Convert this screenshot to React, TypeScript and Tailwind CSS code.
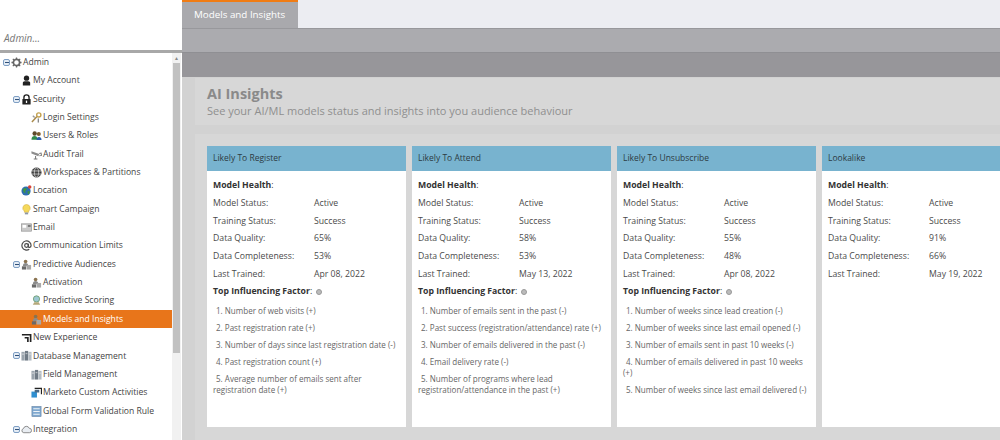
import React from 'react';

type TreeRow = { label: string; depth: number; toggle?: boolean; icon: string; active?: boolean };

const tree: TreeRow[] = [
  { label: 'Admin', depth: 0, toggle: true, icon: 'gear' },
  { label: 'My Account', depth: 1, icon: 'person' },
  { label: 'Security', depth: 1, toggle: true, icon: 'lock' },
  { label: 'Login Settings', depth: 2, icon: 'key' },
  { label: 'Users & Roles', depth: 2, icon: 'users' },
  { label: 'Audit Trail', depth: 2, icon: 'camera' },
  { label: 'Workspaces & Partitions', depth: 2, icon: 'globe' },
  { label: 'Location', depth: 1, icon: 'earth' },
  { label: 'Smart Campaign', depth: 1, icon: 'bulb' },
  { label: 'Email', depth: 1, icon: 'mail' },
  { label: 'Communication Limits', depth: 1, icon: 'at' },
  { label: 'Predictive Audiences', depth: 1, toggle: true, icon: 'audience' },
  { label: 'Activation', depth: 2, icon: 'audience' },
  { label: 'Predictive Scoring', depth: 2, icon: 'scoring' },
  { label: 'Models and Insights', depth: 2, icon: 'audience', active: true },
  { label: 'New Experience', depth: 1, icon: 'arrow' },
  { label: 'Database Management', depth: 1, toggle: true, icon: 'db' },
  { label: 'Field Management', depth: 2, icon: 'db' },
  { label: 'Marketo Custom Activities', depth: 2, icon: 'custom' },
  { label: 'Global Form Validation Rule', depth: 2, icon: 'form' },
  { label: 'Integration', depth: 1, toggle: true, icon: 'cloud' },
];

const cards = [
  {
    title: 'Likely To Register',
    stats: ['Active', 'Success', '65%', '53%', 'Apr 08, 2022'],
    factors: [
      'Number of web visits (+)',
      'Past registration rate (+)',
      'Number of days since last registration date (-)',
      'Past registration count (+)',
      'Average number of emails sent after registration date (+)',
    ],
  },
  {
    title: 'Likely To Attend',
    stats: ['Active', 'Success', '58%', '53%', 'May 13, 2022'],
    factors: [
      'Number of emails sent in the past (-)',
      'Past success (registration/attendance) rate (+)',
      'Number of emails delivered in the past (-)',
      'Email delivery rate (-)',
      'Number of programs where lead registration/attendance in the past (+)',
    ],
  },
  {
    title: 'Likely To Unsubscribe',
    stats: ['Active', 'Success', '55%', '48%', 'Apr 08, 2022'],
    factors: [
      'Number of weeks since lead creation (-)',
      'Number of weeks since last email opened (-)',
      'Number of emails sent in past 10 weeks (-)',
      'Number of emails delivered in past 10 weeks (+)',
      'Number of weeks since last email delivered (-)',
    ],
  },
  {
    title: 'Lookalike',
    stats: ['Active', 'Success', '91%', '66%', 'May 19, 2022'],
    factors: [],
  },
];

const statLabels = ['Model Status:', 'Training Status:', 'Data Quality:', 'Data Completeness:', 'Last Trained:'];

const TreeIcon = ({ name }: { name: string }) => {
  const common = { width: 11, height: 11, viewBox: '0 0 12 12', className: 'shrink-0' };
  switch (name) {
    case 'gear':
      return (
        <svg {...common}>
          <circle cx="6" cy="6" r="3.400" fill="none" stroke="#666" strokeWidth="1.800" />
          <path d="M6 .5v2M6 9.500v2M.5 6h2M9.500 6h2M2 2l1.500 1.500M8.500 8.500 10 10M10 2 8.500 3.500M3.500 8.500 2 10" stroke="#666" strokeWidth="1.400" />
        </svg>
      );
    case 'person':
      return (
        <svg {...common}>
          <circle cx="6" cy="3.500" r="2.900" fill="#222" />
          <path d="M2 11.500V8.500C2 7.200 3.500 6.800 6 6.800s4 .4 4 1.700v3z" fill="#222" />
        </svg>
      );
    case 'lock':
      return (
        <svg {...common}>
          <path d="M3.200 6V3.800a2.800 2.800 0 0 1 5.600 0V6" fill="none" stroke="#222" strokeWidth="1.500" />
          <rect x="1.500" y="5.500" width="9" height="6" rx="0.600" fill="#222" />
          <rect x="5.300" y="7.200" width="1.400" height="2.600" fill="#fff" />
        </svg>
      );
    case 'key':
      return (
        <svg {...common}>
          <path d="M1 11 6.500 5" stroke="#a98a4a" strokeWidth="1.600" />
          <circle cx="8.500" cy="3.200" r="2.300" fill="none" stroke="#c2a04e" strokeWidth="1.500" />
          <path d="M2 4l2 2" stroke="#999" strokeWidth="1.500" />
          <path d="M8 7v4.500" stroke="#8a8a8a" strokeWidth="1.500" />
        </svg>
      );
    case 'users':
      return (
        <svg {...common}>
          <circle cx="4" cy="3.800" r="2.400" fill="#5d4a2a" />
          <circle cx="8.500" cy="4.300" r="2.200" fill="#7a5c2e" />
          <path d="M.5 10.500c0-3 1.500-4 3.500-4s3 1 3 4z" fill="#2f8a4a" />
          <path d="M6 11c0-2.500 1-3.500 2.700-3.500S11.500 8.500 11.500 11z" fill="#2a5fa8" />
        </svg>
      );
    case 'camera':
      return (
        <svg {...common}>
          <path d="M.5 2.500 9 5.500 8 8 .5 5z" fill="#8d8d8d" />
          <path d="M9 5l2-.5.500 2.500-2.500.5M5 7.500V11M3 11h4" stroke="#777" strokeWidth="1.100" fill="none" />
        </svg>
      );
    case 'globe':
      return (
        <svg {...common} fill="none" stroke="#333" strokeWidth="1">
          <circle cx="6" cy="6" r="5" fill="#444" />
          <ellipse cx="6" cy="6" rx="2.300" ry="5" stroke="#ddd" strokeWidth="0.800" />
          <path d="M1 4.300h10M1 7.700h10" stroke="#ddd" strokeWidth="0.800" />
        </svg>
      );
    case 'earth':
      return (
        <svg {...common}>
          <circle cx="5.500" cy="6.500" r="5" fill="#2f6fb0" />
          <path d="M2 4.500 5 3l1.500 2-2 1.500.5 2.500-2-1zM7 7l2.500-.5L9 10 7.500 9.500z" fill="#3f9a3e" />
          <circle cx="9.500" cy="2.300" r="1.900" fill="#d6413a" />
        </svg>
      );
    case 'bulb':
      return (
        <svg {...common}>
          <path d="M6 .5a4 4 0 0 0-2.300 7.300V9h4.600V7.800A4 4 0 0 0 6 .5z" fill="#f5d95c" stroke="#cfa92f" strokeWidth="0.600" />
          <rect x="4.200" y="9.300" width="3.600" height="2" fill="#8d97a5" />
        </svg>
      );
    case 'mail':
      return (
        <svg {...common}>
          <rect x="0.500" y="2" width="11" height="8" fill="#c9c9c9" stroke="#8f8f8f" strokeWidth="0.700" />
          <rect x="1.700" y="3.300" width="4" height="3" fill="#fff" />
          <rect x="7.500" y="3.200" width="3" height="2.200" fill="#777" />
        </svg>
      );
    case 'at':
      return (
        <svg {...common} fill="none" stroke="#4a4a4a" strokeWidth="1.300">
          <circle cx="6" cy="6" r="2" />
          <path d="M8 4v3c0 1.600 3 1.400 3-1a5 5 0 1 0-2 4" />
        </svg>
      );
    case 'audience':
      return (
        <svg {...common}>
          <circle cx="5" cy="2.700" r="2" fill="#8a7350" />
          <path d="M2 8c0-2.600 1.300-3.600 3-3.600S8 5.400 8 8z" fill="#8b8b8b" />
          <rect x="1" y="8" width="4.500" height="3.500" fill="#6a6a6a" />
          <rect x="6" y="6.500" width="5" height="5" fill="#a8a8a8" />
        </svg>
      );
    case 'scoring':
      return (
        <svg {...common}>
          <circle cx="6" cy="4.300" r="3.400" fill="#9cc7d2" stroke="#6b9a6a" strokeWidth="0.900" />
          <path d="M2 10.500h8L8.500 8h-5z" fill="#b5a87a" />
        </svg>
      );
    case 'arrow':
      return (
        <svg {...common} fill="none" stroke="#222" strokeWidth="1.800">
          <path d="M1 3h9.500v8M4 6.300h3.500v4.700" />
        </svg>
      );
    case 'db':
      return (
        <svg {...common}>
          <rect x="0.500" y="2" width="3.500" height="9.500" fill="#9aa4ad" />
          <rect x="4.300" y="1" width="3.500" height="10.500" fill="#6f7a85" />
          <rect x="8" y="2" width="3.500" height="9.500" fill="#b3bbc2" />
          <path d="M1 4.500h2.500M5 4h2M8.500 4.500H11" stroke="#eee" strokeWidth="0.700" />
        </svg>
      );
    case 'custom':
      return (
        <svg {...common}>
          <path d="M4 1.500h7.500V8" fill="none" stroke="#222" strokeWidth="1.500" />
          <rect x="0.500" y="5" width="6" height="6.500" fill="#2f8fd0" />
          <rect x="4" y="3" width="5" height="3" fill="#4a6a85" />
        </svg>
      );
    case 'form':
      return (
        <svg {...common}>
          <rect x="1" y="0.500" width="10" height="11" fill="#7fa8cf" stroke="#5f7f9f" strokeWidth="0.600" />
          <path d="M2.500 3h7M2.500 6h7M2.500 9h7" stroke="#eef3f8" strokeWidth="1.100" />
        </svg>
      );
    default:
      return (
        <svg {...common}>
          <path d="M3 9.500a2.300 2.300 0 0 1-.3-4.500 3.300 3.300 0 0 1 6.300-.3 2.400 2.400 0 0 1 .2 4.800z" fill="#e9edf2" stroke="#777" strokeWidth="0.900" />
        </svg>
      );
  }
};

const Toggle = () => (
  <span className="flex h-[7px] w-[7px] shrink-0 items-center justify-center rounded-[2px] border border-[#7f9fc4] bg-[#e4ecf5]">
    <span className="h-px w-[4px] shrink-0 bg-[#2f4f78]" />
  </span>
);

const Sidebar = () => (
  <div className="flex w-[182px] shrink-0 flex-col bg-white">
    <div className="flex h-[50px] items-end px-1 pb-[4px] text-[10px] italic text-[#777]">Admin...</div>
    <div className="h-[3px] bg-[#a8a8a8]" />
    <div className="flex min-h-0 flex-1">
      <div className="flex w-[172px] flex-col pt-[0.300px]">
        {tree.map((row) => (
          <div
            key={row.label}
            className={`flex h-[18.350px] shrink-0 items-center ${row.active ? 'bg-[#e8751a] text-white' : 'text-[#444]'}`}
          >
            <span className={`flex items-center ${row.depth === 0 ? 'w-[11px] pl-[3px]' : row.depth === 1 ? 'w-[21px] pl-[13px]' : 'w-[31px]'}`}>
              {row.toggle && <Toggle />}
            </span>
            <TreeIcon name={row.icon} />
            <span className="ml-[1px] whitespace-nowrap text-[8.600px]">{row.label}</span>
          </div>
        ))}
      </div>
      <div className="flex w-[9px] flex-col bg-[#f1f1f1]">
        <div className="flex h-[10px] items-center justify-center text-[5px] leading-none text-[#888]">▲</div>
        <div className="mx-auto h-[290px] w-[7px] bg-[#c1c1c1]" />
      </div>
    </div>
  </div>
);

const InsightCard = ({ card }: { card: (typeof cards)[number] }) => (
  <div className="flex h-[281px] w-[199px] shrink-0 flex-col bg-white">
    <div className="flex h-[25px] shrink-0 items-center bg-[#78b3cf] px-[6px] text-[8.500px] text-[#2d3b44]">{card.title}</div>
    <div className="flex flex-col px-[6px] pt-[6px] text-[8.700px] text-[#4a4a4a]">
      <div className="flex h-[17.700px] items-center text-[#333]">
        <b className="font-bold">Model Health</b>:
      </div>
      {statLabels.map((label, i) => (
        <div key={label} className="flex h-[17.700px] items-center">
          <span className="w-[101px]">{label}</span>
          <span>{card.stats[i]}</span>
        </div>
      ))}
      {card.factors.length > 0 && (
        <>
          <div className="flex h-[17.700px] items-center gap-[4px] text-[#333]">
            <span>
              <b className="font-bold">Top Influencing Factor</b>:
            </span>
            <span className="h-[6px] w-[6px] rounded-full border border-[#999] bg-[#bbb]" />
          </div>
          <div className="flex flex-col gap-[5.900px] pt-[4px] text-[8.050px] leading-[11.200px] text-[#666]">
            {card.factors.map((factor, i) => (
              <div key={factor} className="indent-[3px]">
                {`${i + 1}. ${factor}`}
              </div>
            ))}
          </div>
        </>
      )}
    </div>
  </div>
);

export default function App() {
  return (
    <div className="flex h-[440px] w-[1000px] overflow-hidden font-['Open_Sans',sans-serif]">
      <Sidebar />
      <div className="flex min-w-0 flex-1 flex-col bg-[#d2d2d2]">
        <div className="flex h-[28px] bg-[#ecedf2]">
          <div className="flex w-[116px] items-center border-t-2 border-[#f07c14] bg-[#a9a9ad] pl-[12px] text-[9.800px] text-white">
            Models and Insights
          </div>
        </div>
        <div className="h-[24px] border-t border-[#98989c] bg-[#ababaf]" />
        <div className="h-[25px] border-t border-[#8f8f93] bg-[#97969a]" />
        <div className="pl-[13px] pt-[1px]">
          <div className="flex h-[47px] flex-col justify-center bg-[#d7d7d7] pl-[12px]">
            <div className="text-[14.500px] font-bold leading-[18px] text-[#8a8a8a]">AI Insights</div>
            <div className="text-[11px] leading-[16px] text-[#8f8f8f]">
              See your AI/ML models status and insights into you audience behaviour
            </div>
          </div>
          <div className="mt-[9px] flex gap-[6px] bg-[#d7d7d7] pb-[13px] pl-[12px] pt-[12px]">
            {cards.map((card) => (
              <InsightCard key={card.title} card={card} />
            ))}
          </div>
        </div>
      </div>
    </div>
  );
}
